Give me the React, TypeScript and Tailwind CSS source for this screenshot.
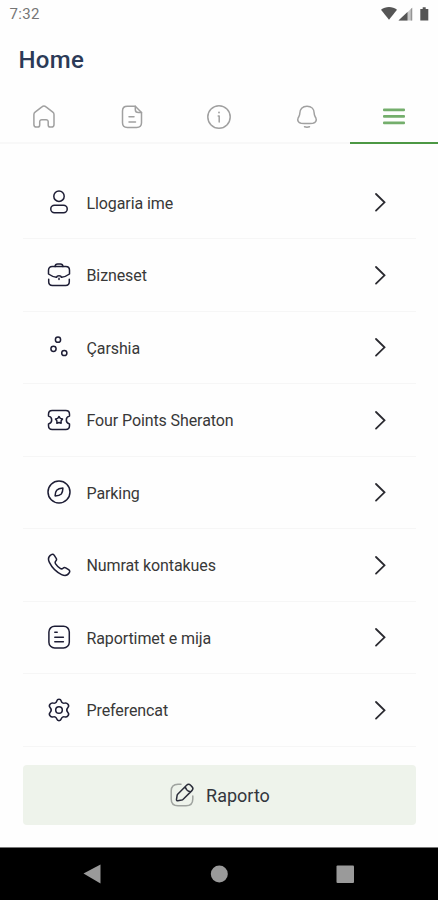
import type { ReactNode } from "react";

function Icon({ children, className = "text-[#1d1d35]" }: { children: ReactNode; className?: string }) {
  return (
    <svg
      viewBox="0 0 24 24"
      className={`h-6 w-6 shrink-0 ${className}`}
      fill="none"
      stroke="currentColor"
      strokeWidth={1.5}
      strokeLinecap="round"
      strokeLinejoin="round"
    >
      {children}
    </svg>
  );
}

const TABS = [
  {
    id: "home",
    icon: (
      <path d="M1.900 9.600c0-1 .4-1.900 1.200-2.500l6.800-5.200c1.200-1 2.900-1 4.100 0l6.800 5.200c.8.600 1.200 1.500 1.200 2.500v9.900c0 1.600-1 2.600-2.600 2.600h-1.100c-1.200 0-2.100-.9-2.100-2.100v-3.200c0-1.200-.9-2.100-2.100-2.100h-4.300c-1.200 0-2.100.9-2.100 2.100V20c0 1.200-.9 2.100-2.100 2.100H4.500c-1.600 0-2.600-1-2.600-2.600Z" />
    ),
  },
  {
    id: "news",
    icon: (
      <>
        <path d="M15.300 1.300H7.300C4.200 1.300 2.500 3 2.500 6v11.800c0 3 1.700 4.700 4.800 4.700h9.400c3.100 0 4.800-1.700 4.800-4.700V7.500Z" />
        <path d="M15.300 1.300v3.100c0 1.900 1.200 3.100 3.100 3.100h3.100" />
        <path d="M9 11.800h5M9 17h6.500" />
      </>
    ),
  },
  {
    id: "info",
    icon: (
      <>
        <circle cx="12" cy="12" r="11.200" />
        <path d="M11.200 11h1v6" />
        <path d="M12 7.300v.2" strokeWidth={1.800} />
      </>
    ),
  },
  {
    id: "alerts",
    icon: (
      <>
        <path d="M12 1.200c-4.600 0-7.200 3.100-7.200 7.100 0 2.700-.9 3-1.600 4.500-1.200 2.700.2 4.900 2.900 5.400 3.800.5 8 .5 11.800 0 2.700-.5 4.100-2.700 2.900-5.400-.7-1.500-1.600-1.800-1.600-4.500 0-4-2.600-7.100-7.200-7.100Z" />
        <path d="M9.500 21.800c1.500.5 3.500.5 5 0" />
      </>
    ),
  },
];

const MENU = [
  {
    label: "Llogaria ime",
    icon: (
      <>
        <circle cx="12" cy="6.200" r="5.200" />
        <rect x="3.800" y="15.300" width="16.400" height="7.400" rx="3.700" ry="3.400" />
      </>
    ),
  },
  {
    label: "Bizneset",
    icon: (
      <>
        <path d="M8 3.600c.2-1.700 1-2.500 2.600-2.500h2.800c1.600 0 2.400.8 2.600 2.500" />
        <path d="M9.500 14.300C6.500 13.800 3.800 12.700 1.500 11V7.300c0-2.300 1.400-3.700 3.700-3.700h13.600c2.300 0 3.700 1.400 3.700 3.700V11c-2.300 1.700-5 2.800-8 3.300" />
        <path d="M9.500 14.300c.5-2.200 4.500-2.200 5 0M12 15.200v1.300" />
        <path d="M1.700 16.200v2.500c0 2.300 1.400 3.700 3.700 3.700h13.200c2.300 0 3.700-1.400 3.700-3.700v-2.500" />
      </>
    ),
  },
  {
    label: "Çarshia",
    icon: (
      <>
        <circle cx="11" cy="4.700" r="2.600" />
        <circle cx="6.500" cy="13.800" r="2.600" />
        <circle cx="17.300" cy="18" r="2.600" />
      </>
    ),
  },
  {
    label: "Four Points Sheraton",
    icon: (
      <>
        <path d="M5.200 2.500h13.600c2.300 0 3.700 1.400 3.700 3.700v1.900c-2 .5-3.200 2-3.200 3.900s1.200 3.400 3.200 3.900v1.900c0 2.300-1.400 3.700-3.700 3.700H5.200c-2.300 0-3.700-1.400-3.700-3.700v-1.900c2-.5 3.200-2 3.200-3.900s-1.200-3.400-3.200-3.900V6.200c0-2.300 1.400-3.700 3.700-3.700Z" />
        <path d="m12 8.500 1.300 1.900 2.200.6-1.400 1.900v2.400L12 14.500l-2.100.8v-2.400L8.500 11l2.200-.6Z" />
      </>
    ),
  },
  {
    label: "Parking",
    icon: (
      <>
        <circle cx="12" cy="12" r="11" />
        <path d="M15.900 8.100c-2.800.3-5 1-6.200 2.200-1 1.100-1.500 3-1.600 5.600 2.800-.1 5-.7 6.200-1.900 1-1.200 1.500-3.200 1.600-5.900Z" />
      </>
    ),
  },
  {
    label: "Numrat kontakues",
    icon: (
      <path d="M4.300 1.700c1.100-.7 2.300-.3 3 .7l1.900 2.900c.6 1 .4 1.900-.4 2.700-1 1-.9 1.700-.2 2.800 1.200 1.800 2.800 3.400 4.600 4.600 1.100.7 1.800.8 2.800-.2.800-.8 1.700-1 2.700-.4l2.900 1.900c1 .7 1.400 1.900.7 3-1.700 2.900-4.500 3.500-7.700 1.900C8.900 18.800 5.200 15.100 2.400 9.400.8 6.200 1.400 3.400 4.300 1.700Z" />
    ),
  },
  {
    label: "Raportimet e mija",
    icon: (
      <>
        <rect x="1.900" y="1.200" width="20.400" height="21.800" rx="5.800" />
        <path d="M7.800 7.200h2.400M7.800 12.200h8.600M7.800 16.700h8.600" />
      </>
    ),
  },
  {
    label: "Preferencat",
    icon: (
      <>
        <circle cx="12" cy="12" r="3.300" />
        <path d="M9.700 3.200c.7-2.500 3.900-2.500 4.600 0 .4 1.500 1.900 2.300 3.300 1.900 2.600-.8 5.300 2.300 3.300 4.400-1.300 1.400-1.300 3.600 0 5 2 2.100-.7 5.200-3.300 4.400-1.400-.4-2.900.4-3.300 1.900-.7 2.500-3.900 2.500-4.600 0-.4-1.500-1.900-2.300-3.300-1.900-2.600.8-5.300-2.300-3.300-4.400 1.300-1.400 1.300-3.600 0-5-2-2.100.7-5.200 3.300-4.400 1.400.4 2.900-.4 3.300-1.900Z" />
      </>
    ),
  },
];

function StatusBar() {
  return (
    <div className="flex h-7 items-center justify-between pr-2 pl-[9.5px]">
      <span className="pt-px text-[15px] tracking-[0.3px] text-[#757575]">7:32</span>
      <svg width="50" height="16" viewBox="0 0 50 16" fill="#555">
        <path d="M1 3.800C5.500.1 12.500.1 17 3.800L9 13.800Z" />
        <path d="M18.500 14.500 32.500 1.500v13Z" fill="#c8c8c8" />
        <path d="M18.500 14.500 27.500 6v8.500Z" />
        <path d="M31.800 2v12.500h-1V3Z" fill="#888" />
        <path d="M40.300 3h2.400V1.200h3V3h2.600v11.500h-8Z" />
      </svg>
    </div>
  );
}

function TabBar() {
  return (
    <nav className="grid h-[53px] grid-cols-5 border-b-2 border-[#f8f8f8]">
      {TABS.map((tab) => (
        <button key={tab.id} className="flex items-center justify-center pl-px">
          <Icon className="text-[#a0a0a0]">{tab.icon}</Icon>
        </button>
      ))}
      <button className="-mb-0.5 flex items-center justify-center border-b-2 border-[#4c9844]">
        <svg width="24" height="18" viewBox="0 0 24 18" fill="#74ae6c">
          <rect x="1" y="0.500" width="22" height="2.700" rx="1" />
          <rect x="1" y="7" width="22" height="2.700" rx="1" />
          <rect x="1" y="13.500" width="22" height="2.700" rx="1" />
        </svg>
      </button>
    </nav>
  );
}

function MenuRow({ label, icon }: { label: string; icon: ReactNode }) {
  return (
    <li className="flex h-[72.5px] items-center border-b border-[#f6f6f6] pr-7 pl-[23.5px]">
      <Icon>{icon}</Icon>
      <span className="ml-4 flex-1 pt-[3px] text-base tracking-[-0.1px] text-[#383838]">{label}</span>
      <svg
        width="16"
        height="20"
        viewBox="0 0 16 20"
        fill="none"
        stroke="#2a2a30"
        strokeWidth={1.800}
        strokeLinecap="round"
      >
        <path d="m4 2 8.500 8.300L4 18.600" />
      </svg>
    </li>
  );
}

export default function App() {
  return (
    <div className="flex h-[900px] w-[438px] flex-col overflow-hidden bg-[#fefefe] font-['Roboto',sans-serif]">
      <StatusBar />
      <h1 className="flex h-[63px] items-center pl-[18.5px] text-2xl font-medium tracking-[0.3px] text-[#2b3a57]">
        Home
      </h1>
      <TabBar />

      <ul className="mt-[22.5px] mr-[22px] ml-[23px]">
        {MENU.map((item) => (
          <MenuRow key={item.label} label={item.label} icon={item.icon} />
        ))}
      </ul>

      <button className="mt-[18.5px] mr-[22px] ml-[23px] flex h-[60px] items-center justify-center gap-3 rounded bg-[#eef3eb] pl-px">
        <Icon className="text-[#2b2d3a]">
          <path
            d="M11 1.200H8C3.500 1.200 1.200 3.500 1.200 8v8c0 4.500 2.300 6.800 6.800 6.800h8c4.500 0 6.800-2.300 6.800-6.800v-3"
            stroke="#9fa39f"
          />
          <path d="m16.600 2.300-8.700 8.700c-.4.400-.7 1-.8 1.500l-.6 3.900c-.1.900.4 1.400 1.300 1.300l3.900-.6c.5-.1 1.100-.4 1.500-.8l8.700-8.700c1.300-1.300 1.300-2.700 0-4l-1.300-1.300c-1.300-1.300-2.700-1.300-4 0ZM15.200 3.900c.7 2.500 2.400 4.200 4.900 4.900" />
        </Icon>
        <span className="pt-0.5 text-lg text-[#33363d]">Raporto</span>
      </button>

      <div className="mt-auto flex h-[53px] items-center border-t border-[#777] bg-black">
        <svg width="438" height="52" viewBox="0 0 438 52" fill="#9a9a9a">
          <path d="M83.500 25.500 100.500 16.500v19Z" />
          <circle cx="219.300" cy="26" r="8.500" />
          <rect x="336.500" y="17.500" width="17.500" height="17.500" rx="1" />
        </svg>
      </div>
    </div>
  );
}
